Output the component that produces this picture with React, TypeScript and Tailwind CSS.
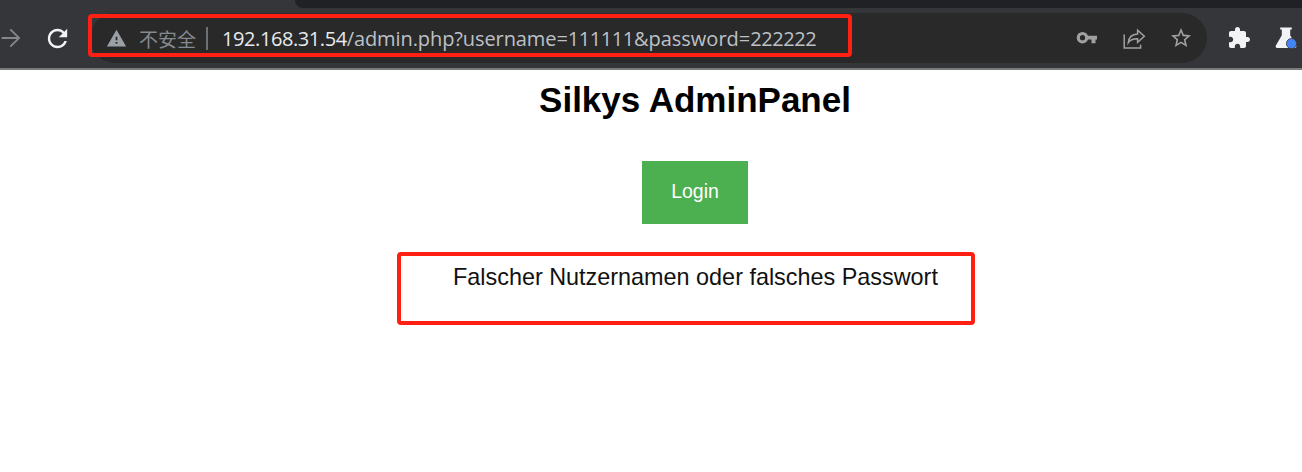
import type { ReactNode } from "react";

function Glyph({ path, className }: { path: string; className: string }) {
  return (
    <svg viewBox="0 0 24 24" fill="currentColor" fillRule="evenodd" className={`shrink-0 ${className}`}>
      <path d={path} />
    </svg>
  );
}

const FORWARD = "M12 4l-1.2 1.2L16.9 11.2H4v1.6h12.9l-6.1 6L12 20l8-8z";
const RELOAD =
  "M17.65 6.35C16.2 4.9 14.21 4 12 4c-4.42 0-7.99 3.58-7.99 8s3.57 8 7.99 8c3.73 0 6.84-2.55 7.73-6h-2.08c-.82 2.33-3.04 4-5.65 4-3.31 0-6-2.69-6-6s2.69-6 6-6c1.66 0 3.14.69 4.22 1.78L13 11h7V4l-2.35 2.35z";
const WARNING = "M1 21h22L12 2 1 21zm12-3h-2v-2h2v2zm0-4h-2v-4h2v4z";
const STAR =
  "M22 9.24l-7.19-.62L12 2 9.19 8.63 2 9.24l5.46 4.73L5.82 21 12 17.27 18.18 21l-1.63-7.03L22 9.24zM12 15.4l-3.76 2.27 1-4.28-3.32-2.88 4.38-.38L12 6.1l1.71 4.04 4.38.38-3.32 2.88 1 4.28L12 15.4z";
const PUZZLE =
  "M20.5 11H19V7c0-1.1-.9-2-2-2h-4V3.5C13 2.12 11.88 1 10.5 1S8 2.12 8 3.5V5H4c-1.1 0-1.99.9-1.99 2v3.8H3.5c1.49 0 2.7 1.21 2.7 2.7s-1.21 2.7-2.7 2.7H2V20c0 1.1.9 2 2 2h3.8v-1.5c0-1.49 1.21-2.7 2.7-2.7 1.49 0 2.7 1.21 2.7 2.7V22H17c1.1 0 2-.9 2-2v-4h1.5c1.38 0 2.5-1.12 2.5-2.5S21.88 11 20.5 11z";

function KeyIcon() {
  return (
    <svg viewBox="0 0 24 24" className="size-6 shrink-0">
      <circle cx="7.5" cy="11.7" r="4.2" fill="none" stroke="currentColor" strokeWidth="3.2" />
      <path d="M12 9.7H22v3.9h-1.5v3.7h-4v-3.7H12z" fill="currentColor" />
    </svg>
  );
}

function ShareIcon() {
  return (
    <svg viewBox="0 0 24 24" fill="none" stroke="currentColor" strokeWidth="1.5" className="size-6 shrink-0">
      <path d="M2.2 8.5v13.6h16.4v-3.4" />
      <path d="M6.3 16.7c.4-5.5 3.8-8.4 9.3-8.7V4.2l6.7 6-6.7 6v-3.5c-4-.1-7.2.8-9.3 4z" />
    </svg>
  );
}

function FlaskIcon() {
  return (
    <svg viewBox="0 0 24 24" className="size-6 shrink-0">
      <path d="M6.2 1.6h11.6v1.9h-1.6v5.7l5.9 10.3c.7 1.3-.1 2.6-1.3 2.6H3.2c-1.3 0-2-1.3-1.3-2.6L7.8 9.2V3.5H6.2z" fill="#f1f3f4" />
      <circle cx="17.5" cy="17.6" r="5.1" fill="#4285f4" stroke="#35363a" strokeWidth="0.8" />
    </svg>
  );
}

function Highlight({ className, children }: { className: string; children?: ReactNode }) {
  return <div className={`rounded-[4px] border-4 border-[#ff2013] ${className}`}>{children}</div>;
}

function Toolbar() {
  return (
    <header className="relative h-[70px] overflow-hidden border-b-2 border-[#7b7b7d] bg-[#35363a]">
      <div className="flex h-2 justify-end">
        <div className="w-[1007px] rounded-bl-[10px] bg-[#202124]" />
      </div>
      <div className="mt-[5px] flex h-[50px] items-center">
        <div className="flex w-[90px] shrink-0 items-center">
          <Glyph path={FORWARD} className="-ml-[3px] size-7 text-[#85868a]" />
          <Glyph path={RELOAD} className="ml-[18px] size-[29px] text-[#f1f3f4]" />
        </div>
        <div className="flex h-[50px] w-[1117px] shrink-0 items-center rounded-full bg-[#292929] pr-[14px] pl-4">
          <Glyph path={WARNING} className="size-[21px] text-[#9aa0a6]" />
          <span className="ml-3 w-[60px] pt-px font-['Noto_Sans_CJK_SC',sans-serif] text-[19px] leading-[24px] whitespace-nowrap text-[#858a8e]">
            不安全
          </span>
          <span className="ml-[7px] h-[23px] w-[2px] bg-[#6f7072]" />
          <span className="ml-[14px] pt-[2px] font-['Open_Sans',sans-serif] text-[20px] leading-[24px] whitespace-nowrap text-[#bdc1c6]">
            <span className="tracking-[-0.42px] text-[#e8eaed]">192.168.31.54</span>
            <span className="tracking-[-0.09px]">/admin.php?username=</span>
            <span className="tracking-[-0.42px]">111111</span>&amp;password=
            <span className="tracking-[-0.42px]">222222</span>
          </span>
          <div className="ml-auto flex items-center gap-[23px] text-[#a0a0a0]">
            <KeyIcon />
            <ShareIcon />
            <Glyph path={STAR} className="size-6" />
          </div>
        </div>
        <Glyph path={PUZZLE} className="ml-5 size-6 text-[#f1f3f4]" />
        <div className="ml-[23px] shrink-0">
          <FlaskIcon />
        </div>
      </div>
      <Highlight className="absolute top-[14px] left-[88px] h-[43px] w-[764px]" />
    </header>
  );
}

export default function App() {
  return (
    <div className="h-[472px] w-[1302px] overflow-hidden bg-white font-['Liberation_Sans',Arial,sans-serif]">
      <Toolbar />
      <main className="flex flex-col items-start">
        <h1 className="mt-[9px] ml-[395px] w-[600px] text-center text-[35px] leading-[41px] font-bold whitespace-nowrap text-black">
          Silkys AdminPanel
        </h1>
        <button className="mt-[41px] ml-[642px] h-[63px] w-[106px] bg-[#4caf50] pb-[2px] text-[19.5px] text-white">Login</button>
        <Highlight className="mt-7 ml-[397px] h-[73px] w-[578px] pt-[7px] pl-[52px]">
          <p className="text-[23.4px] leading-[28px] whitespace-nowrap text-[#111]">
            Falscher Nutzernamen oder falsches Passwort
          </p>
        </Highlight>
      </main>
    </div>
  );
}
